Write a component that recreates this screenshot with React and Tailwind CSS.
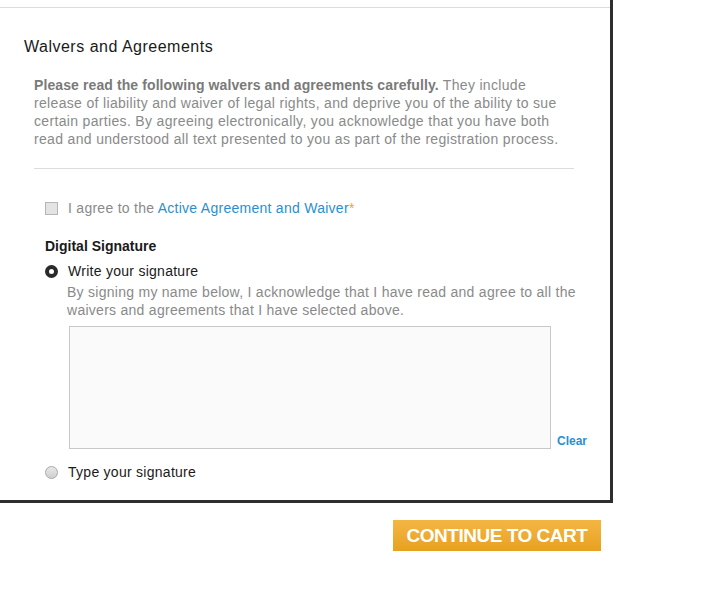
import React from 'react'

export default function App() {
  return (
    <div className="w-[711px] h-[609px] bg-white" style={{ fontFamily: '"Liberation Sans", Arial, sans-serif' }}>
      <div className="w-[613px] h-[503px] border-r-[3px] border-b-[3px] border-[#2e2e2e] flex flex-col">
        <div className="h-[7px] shrink-0" />
        <div className="border-t border-[#dcdcdc] flex-1 pl-[24px]">
          <h2 className="mt-[30px] text-[16px] leading-[18px] tracking-[0.5px] text-[#1a1a1a]">Walvers and Agreements</h2>

          <div className="ml-[10px] mt-[20px] text-[14px] leading-[18px] tracking-[0.33px] text-[#8a8a8a] whitespace-nowrap">
            <p>
              <b className="text-[#7a7a7a] tracking-[0.1px]">Please read the following walvers and agreements carefully.</b> They include<br />
              release of liability and waiver of legal rights, and deprive you of the ability to sue<br />
              certain parties. By agreeing electronically, you acknowledge that you have both<br />
              read and understood all text presented to you as part of the registration process.
            </p>
            <div className="mt-[20px] border-t border-[#dcdcdc] w-[540px]" />
          </div>

          <div className="ml-[21px] mt-[30px]">
            <label className="flex items-center gap-[10px] text-[14px] leading-[18px] tracking-[0.27px] text-[#8a8a8a]">
              <span className="w-[13px] h-[13px] border border-[#b5b5b5] bg-[#e3e3e3] shrink-0" />
              <span>
                I agree to the <span className="text-[#2a8fcf]">Active Agreement and Waiver</span>
                <span className="text-[#f0a030]">*</span>
              </span>
            </label>

            <h3 className="mt-[20px] text-[14px] leading-[18px] font-semibold text-[#1a1a1a]">Digital Signature</h3>

            <label className="mt-[7px] flex items-center gap-[10px] text-[14px] leading-[18px] tracking-[0.27px] text-[#1a1a1a]">
              <span className="w-[13px] h-[13px] rounded-full border-[4px] border-[#2a2a2a] bg-white shrink-0" />
              <span>Write your signature</span>
            </label>

            <p className="ml-[22px] mt-[3px] text-[14px] leading-[18px] tracking-[0.27px] text-[#8a8a8a] whitespace-nowrap">
              By signing my name below, I acknowledge that I have read and agree to all the<br />
              waivers and agreements that I have selected above.
            </p>

            <div className="ml-[24px] mt-[7px] flex items-end gap-[6px]">
              <div className="w-[482px] h-[123px] shrink-0 border border-[#c8c8c8] bg-[#fafafa]" />
              <span className="text-[12px] leading-[14px] font-bold text-[#2a8fcf] mb-[1px]">Clear</span>
            </div>

            <label className="mt-[14px] flex items-center gap-[10px] text-[14px] leading-[18px] tracking-[0.27px] text-[#1a1a1a]">
              <span className="w-[13px] h-[13px] rounded-full border border-[#a8a8a8] bg-gradient-to-b from-[#e8e8e8] to-[#cfcfcf] shrink-0" />
              <span>Type your signature</span>
            </label>
          </div>
        </div>
      </div>

      <div className="w-[601px] flex justify-end mt-[17px]">
        <button className="w-[208px] h-[31px] bg-gradient-to-b from-[#f4b642] to-[#e8a11e] text-white text-[19px] leading-[31px] font-bold tracking-tight">
          CONTINUE TO CART
        </button>
      </div>
    </div>
  )
}
